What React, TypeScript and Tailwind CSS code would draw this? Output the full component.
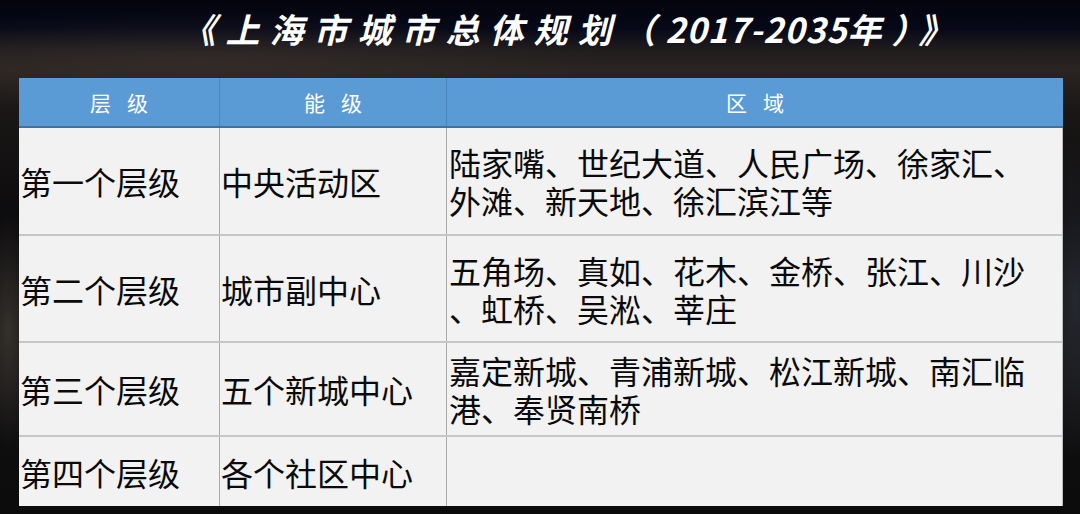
import React from 'react'

type Row = {
  level: string
  tier: string
  areas: string[]
  height: string
}

const rows: Row[] = [
  {
    level: '第一个层级',
    tier: '中央活动区',
    areas: ['陆家嘴、世纪大道、人民广场、徐家汇、', '外滩、新天地、徐汇滨江等'],
    height: 'h-[108px]',
  },
  {
    level: '第二个层级',
    tier: '城市副中心',
    areas: ['五角场、真如、花木、金桥、张江、川沙', '、虹桥、吴淞、莘庄'],
    height: 'h-[107px]',
  },
  {
    level: '第三个层级',
    tier: '五个新城中心',
    areas: ['嘉定新城、青浦新城、松江新城、南汇临', '港、奉贤南桥'],
    height: 'h-[94px]',
  },
  {
    level: '第四个层级',
    tier: '各个社区中心',
    areas: [],
    height: 'h-[69px]',
  },
]

const HeaderCell: React.FC<{ a: string; b: string; last?: boolean }> = ({ a, b, last }) => (
  <div
    className={`flex items-center justify-center text-[21px] leading-none text-white ${
      last ? '' : 'border-r border-[#4a84bd]'
    }`}
  >
    <span>{a}</span>
    <span className="ml-[16px]">{b}</span>
  </div>
)

export default function App() {
  return (
    <div
      className="relative h-[514px] w-[1080px] overflow-hidden bg-[linear-gradient(180deg,#03040e_0px,#060817_28px,#221e1e_52px,#2a2422_70px,#1a1716_110px,#0c0b0d_220px,#121112_380px,#0b0b0c_514px)]"
      style={{ fontFamily: '"Noto Sans CJK SC", "Noto Sans", sans-serif' }}
    >
      {/* city lights on the edges */}
      <div className="pointer-events-none absolute inset-0 bg-[radial-gradient(ellipse_30px_120px_at_8px_330px,rgba(120,110,95,0.35),transparent),radial-gradient(ellipse_40px_160px_at_1075px_300px,rgba(90,100,120,0.3),transparent),radial-gradient(ellipse_400px_50px_at_200px_60px,rgba(70,60,55,0.35),transparent)]" />

      <div className="relative flex h-[78px] items-center justify-center pb-[20px] pl-[64px]">
        <h1 className="text-[34px] font-bold italic leading-none tracking-[10px] text-white">
          《上海市城市总体规划（<span className="tracking-[1px]">2017-2035</span>年）》
        </h1>
      </div>

      <div className="relative ml-[19px] w-[1044px]">
        <div className="grid h-[50px] grid-cols-[201px_227px_616px] border-b-2 border-[#41719c] bg-[#5b9bd5]">
          <HeaderCell a="层" b="级" />
          <HeaderCell a="能" b="级" />
          <HeaderCell a="区" b="域" last />
        </div>

        {rows.map((row, i) => (
          <div
            key={row.level}
            className={`grid grid-cols-[201px_227px_616px] bg-[#f2f2f2] text-[32px] text-[#0a0a0a] ${row.height} ${
              i < rows.length - 1 ? 'border-b-2 border-[#c6c6c6]' : ''
            } border-r border-r-[#bdbdbd]`}
          >
            <div className="flex items-center whitespace-nowrap border-r border-[#a9a9a9] pl-[1px] leading-none">
              {row.level}
            </div>
            <div className="flex items-center whitespace-nowrap border-r border-[#a9a9a9] pl-[1px] leading-none">
              {row.tier}
            </div>
            <div className="flex items-center pl-[2px]">
              <p className="whitespace-pre leading-[38px]">{row.areas.join('\n')}</p>
            </div>
          </div>
        ))}
      </div>
    </div>
  )
}
